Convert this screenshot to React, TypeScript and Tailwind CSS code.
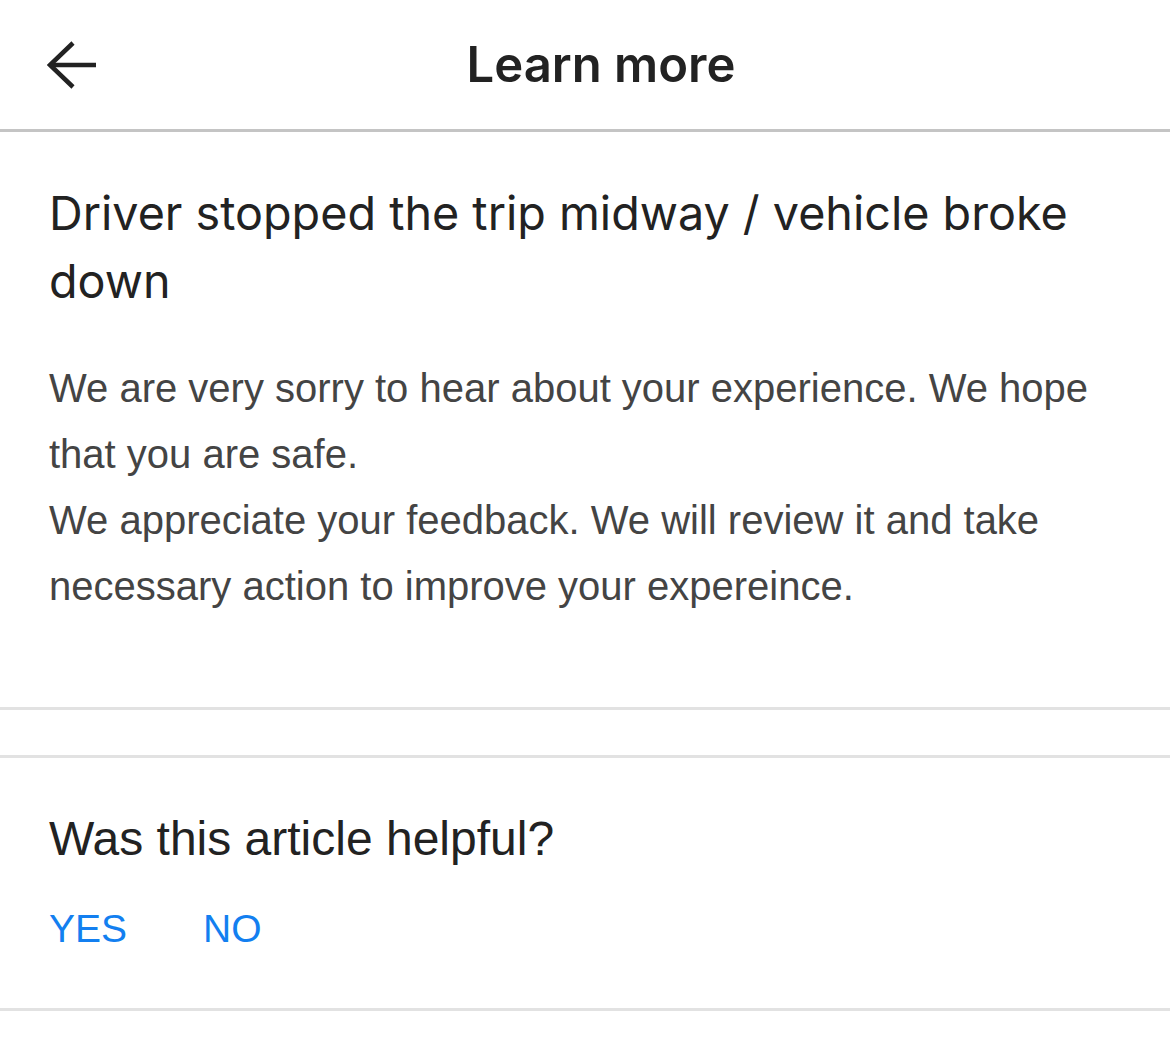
const BackArrow = () => (
  <svg width="50" height="48" viewBox="0 0 50 48" fill="none" stroke="#222222" strokeWidth="4.5">
    <line x1="3" y1="24" x2="49" y2="24" />
    <polyline points="26,2 3,24 26,46" strokeLinejoin="miter" />
  </svg>
);

const App: React.FC = () => {
  return (
    <div className="min-h-screen w-[1170px] bg-white">
      <header className="flex h-[132px] items-center border-b-[3px] border-[#c4c4c4]">
        <div className="flex w-[130px] items-center pl-[47px]">
          <BackArrow />
        </div>
        <h1 className="flex-1 text-center font-['Inter',sans-serif] text-[49px] font-semibold text-[#222222]">
          Learn more
        </h1>
        <div className="w-[98px]" />
      </header>

      <section className="px-[49px] pb-[88px] pt-[47px] border-b-[3px] border-[#e2e2e2]">
        <h2 className="font-['Inter',sans-serif] text-[46.7px] leading-[68px] text-[#222222]">
          Driver stopped the trip midway / vehicle broke down
        </h2>
        <div className="mt-[40px] font-['Liberation_Sans',Arial,sans-serif] text-[40px] leading-[66px] text-[#444444]">
          <p>We are very sorry to hear about your experience. We hope that you are safe.</p>
          <p>We appreciate your feedback. We will review it and take necessary action to improve your expereince.</p>
        </div>
      </section>

      <div className="h-[45px]" />

      <section className="h-[256px] border-y-[3px] border-[#e2e2e2] px-[49px] pt-[53px] font-['Liberation_Sans',Arial,sans-serif]">
        <h3 className="text-[48px] leading-[56px] text-[#222222]">Was this article helpful?</h3>
        <div className="mt-[40px] flex gap-[76px] text-[39px] leading-[44px] text-[#137ff0]">
          <button>YES</button>
          <button>NO</button>
        </div>
      </section>
    </div>
  );
};

export default App;
